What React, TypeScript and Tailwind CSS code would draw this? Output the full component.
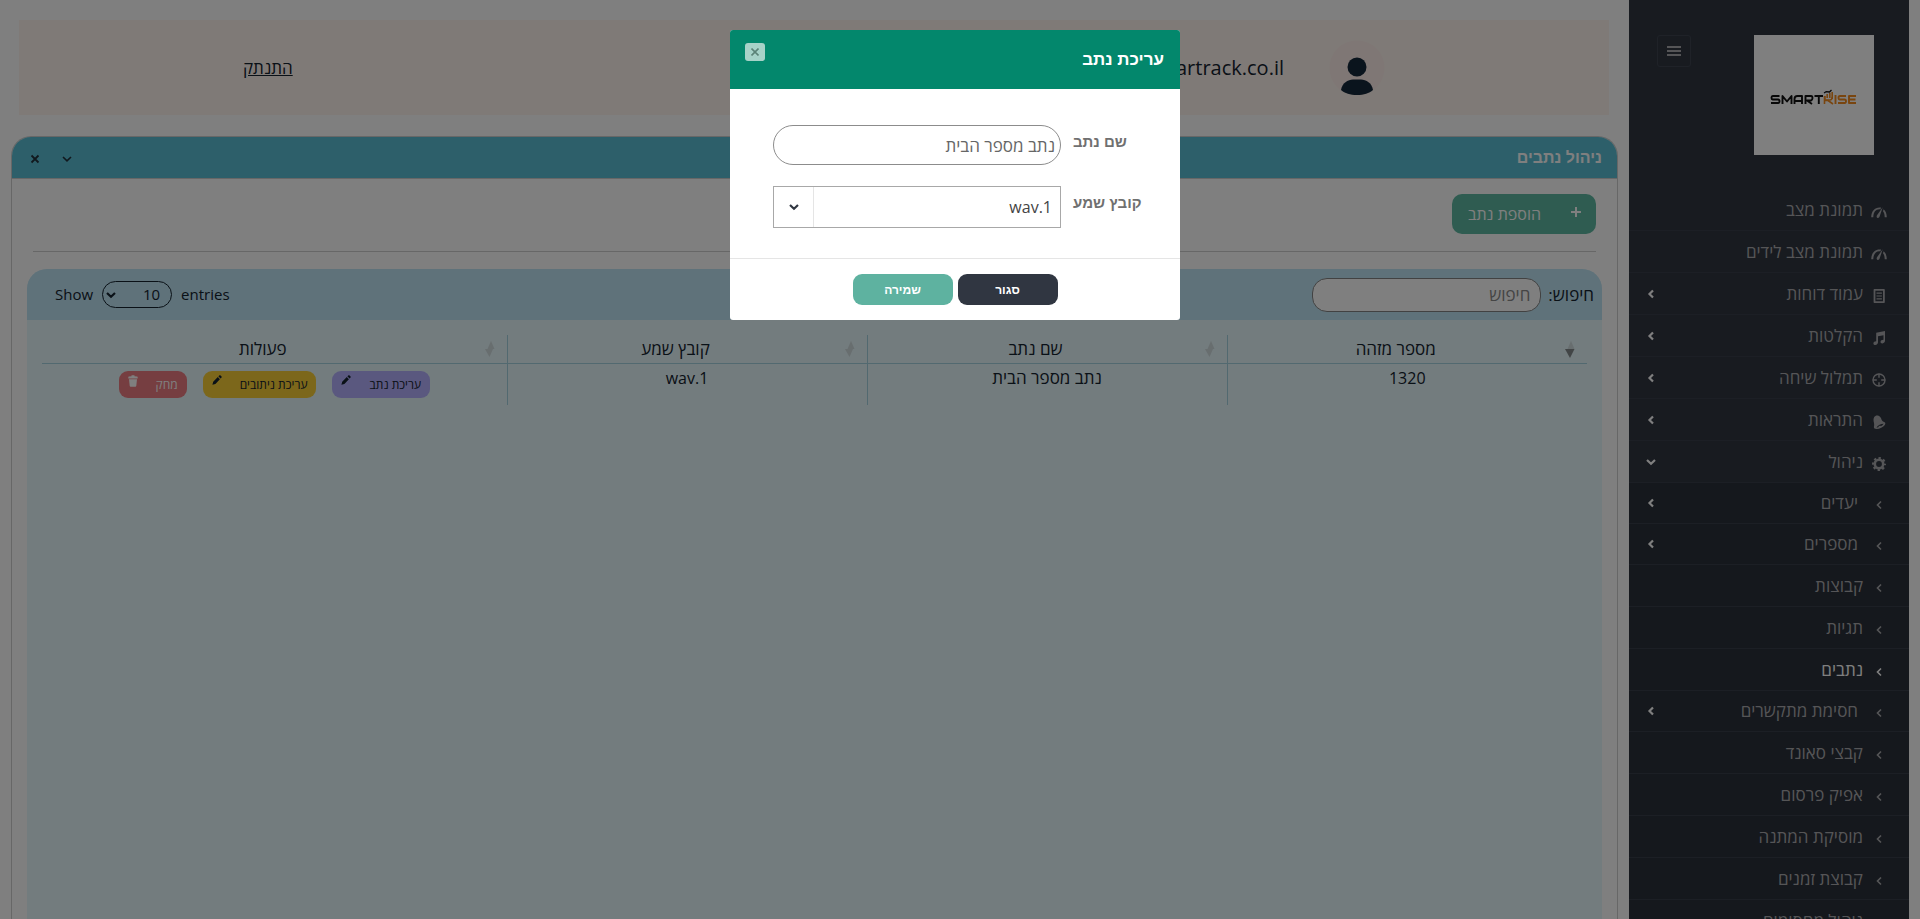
import React, { useState } from "react";

type IconName = "gauge" | "doc" | "note" | "target" | "bell" | "cog";

type MenuItem = {
  label: string;
  icon?: IconName;
  arrow?: "side" | "down";
  active?: boolean;
};

const MENU: MenuItem[] = [
  { label: "תמונת מצב", icon: "gauge" },
  { label: "תמונת מצב לידים", icon: "gauge" },
  { label: "עמוד דוחות", icon: "doc", arrow: "side" },
  { label: "הקלטות", icon: "note", arrow: "side" },
  { label: "תמלול שיחה", icon: "target", arrow: "side" },
  { label: "התראות", icon: "bell", arrow: "side" },
  { label: "ניהול", icon: "cog", arrow: "down" },
];

const SUBMENU: MenuItem[] = [
  { label: "יעדים", arrow: "side" },
  { label: "מספרים", arrow: "side" },
  { label: "קבוצות" },
  { label: "תגיות" },
  { label: "נתבים", active: true },
  { label: "חסימת מתקשרים", arrow: "side" },
  { label: "קבצי סאונד" },
  { label: "אפיק פרסום" },
  { label: "מוסיקת המתנה" },
  { label: "קבוצת זמנים" },
  { label: "ניהול מחסומים" },
];

function Icon({ name }: { name: IconName }) {
  return (
    <svg viewBox="0 0 16 16" className="size-4" fill="currentColor" aria-hidden="true">
      {name === "gauge" && (
        <>
          <path d="M.2 13.200C.3 7.200 3.600 3.400 8.600 3.400l1.500.2-.8 1.800C5.100 4.900 2.400 8 2.300 13.200z" />
          <path d="M11.700 3.200 6 11.300c-.8 1.300-.3 2.300.5 2.600.9.3 1.800-.2 2.100-1.300z" />
          <path d="M12.600 5.200c2.100 1.600 3.100 4.500 3.200 8h-2.100c0-2.500-.5-4.400-1.700-5.900z" />
        </>
      )}
      {name === "doc" && (
        <>
          <path fillRule="evenodd" d="M3.600 1h9.200c.6 0 1 .4 1 1v12c0 .6-.4 1-1 1H3.600c-.6 0-1-.4-1-1V2c0-.6.4-1 1-1zm.8 1.800v10.400h7.600V2.800z" />
          <path d="M5.500 4.500h5.400v1.200H5.500zM5.500 7.400h5.400v1.200H5.500zM5.500 10.300h5.400v1.200H5.500z" />
        </>
      )}
      {name === "note" && (
        <path d="M5.200 2.700 14 1v9.800c0 1.300-1.100 2.400-2.500 2.600-1.200.1-2-.5-2-1.400 0-1.300 1.300-2.200 3-2.200V5.200L7 6.300v6c0 1.400-1.100 2.500-2.600 2.700-1.200.1-2-.5-2-1.500 0-1.300 1.300-2.200 2.800-2.200z" />
      )}
      {name === "target" && (
        <g fill="none" stroke="currentColor" strokeWidth="1.400">
          <circle cx="8" cy="8" r="6" />
          <path d="M8 1.800v4M8 10.200v4M1.800 8h4M10.200 8h4" />
        </g>
      )}
      {name === "bell" && (
        <path
          fillRule="evenodd"
          d="M3.200 3.100C4 1.700 5.500 1.200 7 1.600c2.300.6 3 2.400 3.600 4.200.4 1.200 1.500 2 3 2.500.9.4 1 1.500.2 2.700-1.500 2.200-5.200 4-8.200 4-1.800 0-2.900-.8-2.700-2.200.6-2 .1-3.800-.3-5.500-.3-1.500-.1-2.900.6-4.200zm2.300 10.300c2.400.3 5.700-1.300 7.100-3.600-2.600.2-5.800 1.500-7.100 3.600zm1.500-.6 2.200-1.200.6 1z"
        />
      )}
      {name === "cog" && (
        <g fill="none" stroke="currentColor">
          <circle cx="8" cy="8" r="4.200" strokeWidth="2.600" />
          <circle cx="8" cy="8" r="6" strokeWidth="2" strokeDasharray="2.360 2.350" strokeDashoffset="1.180" />
        </g>
      )}
    </svg>
  );
}

function Chevron({ down = false, bold = false }: { down?: boolean; bold?: boolean }) {
  return (
    <svg viewBox="0 0 10 10" className="size-[10px]" fill="none" stroke="currentColor" strokeWidth={bold ? 2.2 : 1.6} aria-hidden="true">
      <path d={down ? "M1 3l4 3.800L9 3" : "M7 1.500 3.500 5 7 8.500"} />
    </svg>
  );
}

function Pencil() {
  return (
    <svg viewBox="0 0 10 10" className="size-[10px]" fill="currentColor" aria-hidden="true">
      <path d="M7.300.4c.6-.4 1.400 0 1.900.5.500.5.700 1.200.2 1.800L8.500 3.600 6.400 1.300zM5.800 1.900l2.100 2.300-4.500 4.700L.4 9.700l.8-3z" />
    </svg>
  );
}

function Trash() {
  return (
    <svg viewBox="0 0 10 12" className="h-3 w-[10px]" fill="currentColor" aria-hidden="true">
      <path d="M3.500.3h3v.9l2.600.4c.4.1.6.400.6.800v1H.3v-1c0-.4.2-.7.600-.8l2.600-.4zM1 4.200h8l-.7 6.600c-.1.500-.4.900-.9.900H2.600c-.5 0-.8-.4-.9-.9z" />
    </svg>
  );
}

function Logo() {
  return (
    <svg viewBox="0 0 120 120" className="size-[120px] bg-white" role="img" aria-label="SmartRise">
      <g fill="none" strokeWidth="1.900" strokeLinejoin="round">
        <g stroke="#111">
          <path d="M25.500 61H18.700Q17.500 61 17.500 62.700T18.700 64.500H24Q25.500 64.500 25.500 66.300T24 68H17" />
          <path d="M28.500 69V61L33 66.500 37.500 61V69" />
          <path d="M40.500 69V64Q40.500 61 43.500 61H48V69M40.500 66H48" />
          <path d="M51.500 69V61H57Q58.500 61 58.500 63T57 65.500H53L58 69" />
          <path d="M60.500 61H69M64.800 61V69" />
          <path d="M70 58 72 56.700 75.500 57 77.500 55" strokeWidth="1.300" />
        </g>
        <g stroke="#f28a1e">
          <path d="M70.500 69V61M73.200 63V59M75.800 63V58M78.200 64V57M71 65.500H74L79 69" strokeWidth="1.600" />
          <path d="M71 61V65H76Q78.200 65 78.200 62" strokeWidth="1.400" />
          <path d="M81.500 60V69" />
          <path d="M92 61H86Q84.500 61 84.500 62.800T86 64.500H90.500Q92 64.500 92 66.300T90.500 68H84" />
          <path d="M102 61H95V68H102M95 64.500H101.500" />
        </g>
      </g>
    </svg>
  );
}

function Row({ item, sub = false }: { item: MenuItem; sub?: boolean }) {
  const height = sub && item.arrow ? "h-10" : "h-[41px]";
  return (
    <li className="border-b border-[#393f4a]">
      <a
        href="#"
        className={`flex items-center pr-[22px] pl-[17px] text-[17px] ${height} ${item.active ? "text-white" : "text-[#aaabae]"}`}
      >
        <span className="flex w-4 items-center justify-center pt-1">{sub ? <Chevron /> : <Icon name={item.icon!} />}</span>
        <span className={sub && item.arrow ? "mr-[13px]" : "mr-2"}>{item.label}</span>
        {item.arrow && (
          <span className="mr-auto text-white">
            <Chevron down={item.arrow === "down"} bold />
          </span>
        )}
      </a>
    </li>
  );
}

function Sidebar() {
  return (
    <aside className="w-[280px] shrink-0 overflow-hidden bg-[#303641]">
      <div className="flex items-start justify-between pt-[35px] pr-[35px] pb-[34px] pl-7">
        <Logo />
        <button aria-label="תפריט" className="flex h-8 w-[34px] items-center justify-center rounded-[3px] border border-[#3e4551] text-[#aaabae]">
          <svg viewBox="0 0 14 10" className="h-[10px] w-[14px]" fill="currentColor" aria-hidden="true">
            <path d="M0 0h14v2H0zM0 4h14v2H0zM0 8h14v2H0z" />
          </svg>
        </button>
      </div>
      <nav>
        <ul>
          {MENU.map((m) => (
            <Row key={m.label} item={m} />
          ))}
        </ul>
        <ul className="bg-[#2b303a]">
          {SUBMENU.map((m) => (
            <Row key={m.label} item={m} sub />
          ))}
        </ul>
      </nav>
    </aside>
  );
}

function SortIcon({ active = false }: { active?: boolean }) {
  return (
    <svg viewBox="0 0 12 18" className="h-[18px] w-3 shrink-0" aria-hidden="true">
      <path d="M7 1l3.500 8h-7z" fill="#d0dcdf" />
      <path d={active ? "M1 9h9.500L6 18z" : "M1 9h8l-3.500 8z"} fill={active ? "#858b8d" : "#d0dcdf"} />
    </svg>
  );
}

function Action({ label, tone, children }: { label: string; tone: string; children: React.ReactNode }) {
  return (
    <button className={`flex h-[27px] items-start rounded-[9px] px-[9px] text-[12px] ${tone}`}>
      <span className="self-center">{label}</span>
      <span className="mr-[18px] pt-1">{children}</span>
    </button>
  );
}

function RoutersTable() {
  const columns = ["מספר מזהה", "שם נתב", "קובץ שמע", "פעולות"];
  return (
    <table className="w-full table-fixed border-collapse text-center text-[17px] text-[#14222e]">
      <colgroup>
        <col className="w-[23.3%]" />
        <col className="w-[23.3%]" />
        <col className="w-[23.3%]" />
        <col />
      </colgroup>
      <thead>
        <tr className="border-b border-[#a4d2e0]">
          {columns.map((c, i) => (
            <th key={c} className={`h-7 p-0 font-normal ${i < 3 ? "border-l border-[#a4d2e0]" : ""}`}>
              <div className="flex items-center pr-[11px]">
                <SortIcon active={i === 0} />
                <span className="flex-1 leading-7">{c}</span>
              </div>
            </th>
          ))}
        </tr>
      </thead>
      <tbody>
        <tr className="align-top">
          <td className="h-[41px] border-l border-[#a4d2e0] p-0 text-[16px] leading-7">1320</td>
          <td className="border-l border-[#a4d2e0] p-0 leading-7">נתב מספר הבית</td>
          <td className="border-l border-[#a4d2e0] p-0 text-[16px] leading-7">1.wav</td>
          <td className="p-0 pt-[7px]">
            <div className="flex justify-center gap-4">
              <Action label="עריכת נתב" tone="bg-[#b4b0ff]">
                <Pencil />
              </Action>
              <Action label="עריכת ניתובים" tone="bg-[#f8cf37]">
                <Pencil />
              </Action>
              <Action label="מחק" tone="bg-[#ec7c82] text-white">
                <Trash />
              </Action>
            </div>
          </td>
        </tr>
      </tbody>
    </table>
  );
}

function Main() {
  const [size, setSize] = useState("10");
  return (
    <main className="flex min-w-0 flex-1 flex-col pt-5">
      <header className="mr-5 ml-[19px] flex h-[95px] shrink-0 items-center bg-[#fff5ee] px-56 text-[#14222e]">
        <svg viewBox="0 0 56 56" className="size-14" role="img" aria-label="משתמש">
          <circle cx="28" cy="28" r="27.500" fill="#ffeeeb" />
          <circle cx="28" cy="27" r="9.500" fill="#14283a" />
          <path d="M12 50c1-7 7-10.500 12-10.500h8c5 0 11 3.500 12 10.500-4 3.500-9 5-16 5s-12-1.500-16-5z" fill="#14283a" />
        </svg>
        <span dir="ltr" className="mr-[45px] text-[20px]">
          smartrack.co.il
        </span>
        <a href="#" className="mr-auto text-[17px] underline">
          התנתק
        </a>
      </header>

      <section className="mt-[21px] mr-[11px] ml-[11px] flex flex-1 flex-col overflow-hidden rounded-t-[20px] border border-b-0 border-[#cfcfcf]">
        <div className="flex h-[42px] shrink-0 items-center border-b border-[#cfcfcf] bg-[#5abed4] pr-[15px] pl-[18px]">
          <h1 className="font-['Liberation_Sans',sans-serif] text-[16px] font-bold text-white">ניהול נתבים</h1>
          <div className="mr-auto flex items-center gap-[22px] pt-[2px] text-[#22313c]">
            <button aria-label="כיווץ">
              <Chevron down />
            </button>
            <button aria-label="סגירה">
              <svg viewBox="0 0 10 10" className="size-[10px]" fill="none" stroke="currentColor" strokeWidth="1.800">
                <path d="M1.500 1.500l7 7M8.500 1.500l-7 7" />
              </svg>
            </button>
          </div>
        </div>

        <div className="flex flex-1 flex-col bg-white px-[15px] pt-[15px]">
          <div className="mx-[6px] flex border-b border-[#cfcfcf] pb-[17px]">
            <button className="flex h-10 items-center rounded-[10px] bg-[#5eb8a2] pr-[15px] pl-4 text-[16px] text-white">
              <svg viewBox="0 0 10 10" className="mb-1 size-[10px]" fill="none" stroke="currentColor" strokeWidth="2" aria-hidden="true">
                <path d="M5 0v10M0 5h10" />
              </svg>
              <span className="mr-[30px]">הוספת נתב</span>
            </button>
          </div>

          <div className="mt-[17px] flex flex-1 flex-col overflow-hidden rounded-t-[20px] bg-[#e6f8fc]">
            <div className="flex h-[51px] shrink-0 items-center bg-[#bee4f4] pr-2 pl-7 text-[#14222e]">
              <label htmlFor="search" className="text-[17px]">
                חיפוש:
              </label>
              <input
                id="search"
                placeholder="חיפוש"
                className="mr-[7px] h-[34px] w-[229px] rounded-[15px] border border-[#858585] bg-white px-[10px] text-[17px] placeholder:text-[#8a8a8a]"
              />
              <label dir="ltr" className="mr-auto flex items-center text-[15px]">
                Show
                <span dir="rtl" className="relative mx-[9px] flex items-center">
                  <select
                    value={size}
                    onChange={(e) => setSize(e.target.value)}
                    className="h-[27px] w-[70px] appearance-none rounded-[14px] border border-[#14222e] bg-transparent pr-[11px] text-[15px]"
                  >
                    <option>10</option>
                    <option>25</option>
                    <option>50</option>
                  </select>
                  <span className="pointer-events-none absolute left-1">
                    <Chevron down bold />
                  </span>
                </span>
                entries
              </label>
            </div>
            <div className="px-[15px] pt-[15px]">
              <RoutersTable />
            </div>
          </div>
        </div>
      </section>
    </main>
  );
}

function EditDialog() {
  return (
    <div role="dialog" aria-modal="true" aria-labelledby="dialog-title" className="w-[450px] overflow-hidden rounded-[3px] bg-white font-['Liberation_Sans',sans-serif]">
      <div className="flex h-[59px] items-center justify-between bg-[#03876c] pr-4 pl-[15px]">
        <h2 id="dialog-title" className="text-[17px] font-bold text-white">
          עריכת נתב
        </h2>
        <button aria-label="סגירת החלון" className="mb-4 flex h-[18px] w-5 items-center justify-center rounded-[3px] bg-[#a7d2c8] text-[#5b8277]">
          <svg viewBox="0 0 8 8" className="size-2" fill="none" stroke="currentColor" strokeWidth="1.600">
            <path d="M.5.5l7 7M7.500.500l-7 7" />
          </svg>
        </button>
      </div>
      <form className="flex flex-col gap-[21px] border-b border-[#e5e5e5] pt-9 pb-[30px] pl-[43px]">
        <div className="flex">
          <label htmlFor="router-name" className="flex-1 pt-[6px] pl-3 text-left text-[15px] font-bold text-[#707070]">
            שם נתב
          </label>
          <input
            id="router-name"
            defaultValue="נתב מספר הבית"
            className="h-10 w-72 rounded-[20px] border border-[#8c8c8c] px-[5px] font-['Open_Sans',sans-serif] text-[17px] text-[#666]"
          />
        </div>
        <div className="flex">
          <label htmlFor="audio-file" className="flex-1 pt-[6px] pl-3 text-left text-[15px] font-bold text-[#707070]">
            קובץ שמע
          </label>
          <div className="relative w-72">
            <select id="audio-file" className="h-[42px] w-full appearance-none border border-[#a8a8a8] bg-white pr-2 font-['Open_Sans',sans-serif] text-[16px] text-[#444]">
              <option>1.wav</option>
            </select>
            <span className="pointer-events-none absolute inset-y-px left-px flex w-10 items-center justify-center border-r border-[#e5e5e5] text-[#303641]">
              <Chevron down bold />
            </span>
          </div>
        </div>
      </form>
      <div className="flex justify-center gap-[5px] py-[15px] text-[12px] font-bold text-white">
        <button className="h-[31px] w-[100px] rounded-[9px] bg-[#303641]">סגור</button>
        <button className="h-[31px] w-[100px] rounded-[9px] bg-[#5eb2a0]">שמירה</button>
      </div>
    </div>
  );
}

export default function App() {
  return (
    <div dir="rtl" className="relative h-screen overflow-hidden bg-white font-['Open_Sans','Noto_Sans',sans-serif]">
      <div className="flex h-full pr-[11px]">
        <Sidebar />
        <Main />
      </div>
      <div className="absolute inset-0 flex items-start justify-center bg-black/50 pt-[30px] pr-[10px]">
        <EditDialog />
      </div>
    </div>
  );
}
